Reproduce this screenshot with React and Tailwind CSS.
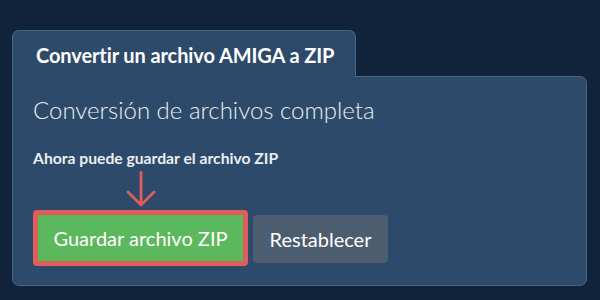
export default function App() {
  return (
    <div
      className="w-[600px] h-[300px] bg-[#11233a] pt-[30px] pl-[12px]"
      style={{ fontFamily: 'Lato, "Open Sans", sans-serif' }}
    >
      {/* Tab */}
      <div className="relative z-10 -mb-px w-[344px] h-[47px] rounded-t-[7px] border border-b-0 border-[#4a6685] bg-[#2e4a6a] pl-[23px] pt-[10px]">
        <h1 className="text-[20px] leading-[28px] font-bold text-white tracking-[-0.1px]">
          Convertir un archivo AMIGA a ZIP
        </h1>
      </div>

      {/* Panel */}
      <div className="w-[575px] h-[210px] rounded-b-[7px] rounded-tr-[7px] border border-[#4a6685] bg-[#2e4a6a] pl-[20px] pt-[18px]">
        <h2 className="text-[24px] leading-[30px] font-light text-[#e9eef3]">
          Conversión de archivos completa
        </h2>
        <p className="mt-[23px] text-[15.7px] leading-[20px] font-bold text-[#e9eef3]">
          Ahora puede guardar el archivo ZIP
        </p>

        <div className="mt-[3px] flex items-end gap-[5px]">
          <div className="flex flex-col items-center">
            <svg width="30" height="36" viewBox="0 0 30 36" className="mb-[3px]">
              <path
                d="M15 1.5 V34 M2 21 L15 34 L28 21"
                fill="none"
                stroke="#df5d5a"
                strokeWidth="2.8"
                strokeLinecap="round"
                strokeLinejoin="round"
              />
            </svg>
            <div className="rounded-[4px] border-[5px] border-[#df5d5a]">
              <button className="block w-[205px] h-[46px] bg-[#5cb85c] text-[20px] text-white font-normal">
                Guardar archivo ZIP
              </button>
            </div>
          </div>
          <button className="mb-[3px] w-[135px] h-[48px] rounded-[4px] bg-[#4c5d70] text-[20px] text-white font-normal">
            Restablecer
          </button>
        </div>
      </div>
    </div>
  );
}
